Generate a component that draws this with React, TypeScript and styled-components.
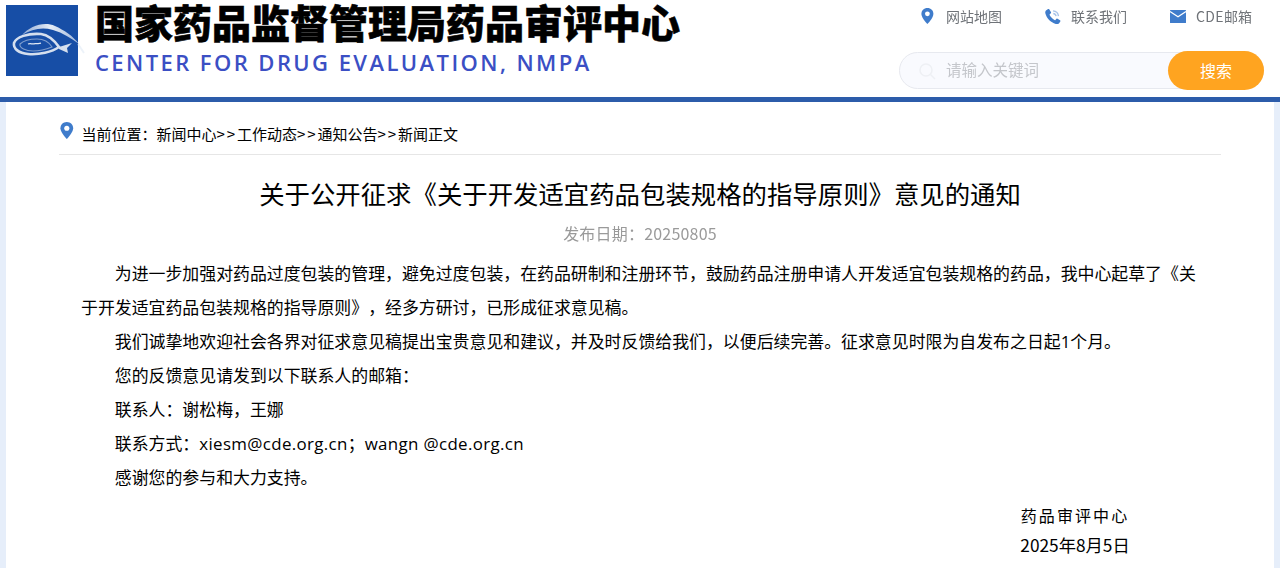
import * as React from 'react'
import styled, { createGlobalStyle } from 'styled-components'

const cjk = `"Noto Sans CJK SC", "Open Sans", sans-serif`
const barBlue = '#2c5caa'
const iconBlue = '#3f7ccb'

const GlobalStyle = createGlobalStyle`
	html, body {
		margin: 0;
		padding: 0;
		height: 568px;
		overflow: hidden;
		background: #e6eefa;
		font-family: "Open Sans", "Noto Sans CJK SC", sans-serif;
		color: #000;
		text-spacing-trim: space-all;
	}
`

const Header = styled.header`
	display: flex;
	justify-content: space-between;
	height: 97px;
	background: #fff;
	border-bottom: 5px solid ${barBlue};
`

const Brand = styled.div`
	display: flex;
	padding: 5px 0 0 6px;
`

const LogoBox = styled.div`
	width: 80px;
	height: 71px;
`

const BrandText = styled.div`
	display: flex;
	flex-direction: column;
	margin-left: 9px;
	margin-top: -4px;
`

const BrandTitle = styled.div`
	font-family: ${cjk};
	font-size: 39px;
	font-weight: 900;
	line-height: 40px;
	white-space: nowrap;
	color: #000;
	-webkit-text-stroke: 0.6px #000;
`

const BrandSub = styled.div`
	margin-top: 7px;
	font-family: "Open Sans", sans-serif;
	font-size: 22px;
	font-weight: 600;
	line-height: 28px;
	letter-spacing: 2.42px;
	white-space: nowrap;
	color: #3b4fc4;
`

const Tools = styled.div`
	display: flex;
	flex-direction: column;
	align-items: flex-end;
	padding: 7px 16px 0 0;
`

const ToolLinks = styled.nav`
	display: flex;
	gap: 43px;
	padding-right: 12px;
`

const ToolLink = styled.a<{ $gap?: number }>`
	display: flex;
	align-items: center;
	gap: ${props => props.$gap || 10}px;
	height: 18px;
	font-family: ${cjk};
	font-size: 14px;
	color: #6f7378;
	filter: blur(0.3px);
`

const Latin = styled.span`
	letter-spacing: 0.4px;
`

const SearchBox = styled.div`
	position: relative;
	display: flex;
	align-items: center;
	box-sizing: border-box;
	width: 365px;
	height: 37px;
	margin-top: 27px;
	padding-left: 18px;
	background: #f9fafe;
	border: 1px solid #e7e9ef;
	border-radius: 19px;
`

const Placeholder = styled.span`
	margin: -4px 0 0 10px;
	font-family: ${cjk};
	font-size: 15.5px;
	color: #c4c6cb;
	filter: blur(0.6px);
`

const SearchButton = styled.button`
	position: absolute;
	right: -1px;
	top: -2px;
	width: 96px;
	height: 39px;
	border: 0;
	border-radius: 20px;
	background: #ffa420;
	color: #fff;
	font-family: ${cjk};
	font-size: 16px;
	padding: 0 0 2px;
`

const Main = styled.main`
	position: relative;
	box-sizing: border-box;
	height: 466px;
	margin: 0 6px;
	padding: 0 53px;
	background: #fff;
	overflow: hidden;
`

const Crumbs = styled.div`
	display: flex;
	align-items: flex-start;
	height: 53px;
	border-bottom: 1px solid #e6e6e6;
	font-family: ${cjk};
	font-size: 15px;
	line-height: 20px;
	box-sizing: border-box;
`

const CrumbIcon = styled.span`
	display: block;
	margin: 20px 8px 0 1px;
`

const CrumbText = styled.span`
	margin-top: 22px;
	white-space: nowrap;
`

const CrumbSep = styled.span`
	letter-spacing: 1.900px;
`

const Title = styled.h1`
	margin: 18px 0 0;
	font-family: ${cjk};
	font-size: 25.4px;
	font-weight: 400;
	line-height: 40px;
	text-align: center;
	white-space: nowrap;
`

const PubDate = styled.div`
	margin-top: 8px;
	font-family: ${cjk};
	font-size: 16px;
	line-height: 24px;
	letter-spacing: 0.2px;
	color: #9a9a9a;
	text-align: center;
	filter: blur(0.5px);
`

const Article = styled.article`
	margin-top: 12px;
	padding: 0 10px 0 22px;
	font-family: "Open Sans", "Noto Sans CJK SC", sans-serif;
	font-size: 16.9px;
	line-height: 34px;
`

const Para = styled.p`
	margin: 0;
	text-indent: 2em;
`

const Email = styled.span`
	letter-spacing: 0.35px;
`

const Signature = styled.div`
	display: flex;
	flex-direction: column;
	align-items: center;
	width: 110px;
	margin: 6px 91px 0 auto;
	font-family: ${cjk};
	line-height: 29px;
`

const SignOrg = styled.div`
	font-size: 16px;
	letter-spacing: 2.1px;
	white-space: nowrap;
`

const SignDate = styled.div`
	font-size: 17.300px;
	white-space: nowrap;
`

const Pin = ({ size = 16 }: { size?: number }) => (
	<svg width={ size * 0.8 } height={ size } viewBox="0 0 16 20">
		<path d="M8 0C3.600 0 .5 3.300.5 7.400.5 12.500 8 20 8 20s7.500-7.500 7.500-12.600C15.500 3.300 12.400 0 8 0z" fill={ iconBlue } />
		<circle cx="8" cy="7.300" r="3" fill="#fff" />
	</svg>
)

const Phone = () => (
	<svg width="16" height="17" viewBox="0 0 17 17">
		<path d="M3.300.6 1 2.200C.2 3 .1 4.300.5 5.700 1.700 10.300 6 15 11.500 16.400c1.500.4 2.700 0 3.500-.8l1.300-1.900c.2-.4.100-.8-.3-1.100l-2.700-1.800c-.4-.2-.8-.2-1.100.1l-1.100 1.300c-.3.300-.7.300-1 .1C8 11.200 6 9.100 4.900 7c-.2-.3-.1-.7.200-1l1.100-1c.3-.3.400-.7.200-1.100L4.500.9C4.200.500 3.700.4 3.300.6z" fill={ iconBlue } />
		<path d="M8.500 2.500c3 .2 5.500 2.500 5.800 5.600M8.800 5.300c1.600.2 2.700 1.300 3 2.900" stroke="#a9c4e8" strokeWidth="1.500" fill="none" />
	</svg>
)

const Mail = () => (
	<svg width="16" height="13" viewBox="0 0 16 13">
		<rect y="0" width="16" height="13" rx="0.500" fill={ iconBlue } />
		<path d="M0 1.500 8 6.800l8-5.300" stroke="#fff" strokeWidth="1.300" fill="none" />
	</svg>
)

const Magnifier = () => (
	<svg width="18" height="18" viewBox="0 0 18 18" fill="none" stroke="#eef0f4" strokeWidth="1.500">
		<circle cx="8" cy="8" r="6" />
		<path d="M12.500 12.500 17 17" />
	</svg>
)

// coordinates are page pixels, the viewBox starts where the logo sits
const Logo = () => (
	<svg width="80" height="71" viewBox="6 5 80 71">
		<defs>
			<linearGradient id="logoArc" x1="0" y1="0" x2="1" y2="0">
				<stop offset="0" stopColor="#8fa9d4" />
				<stop offset="0.5" stopColor="#e6edf6" />
				<stop offset="1" stopColor="#9db5da" />
			</linearGradient>
		</defs>
		<rect x="6" y="5" width="72" height="71" fill="#174ea6" />
		<path d="M22 35C30 26 44 21 55 26c9 4 18 10 24 18-8-6-16-11-26-14-11-3-21-1-31 5z" fill="url(#logoArc)" />
		<path d="M14 43c2-6 14-10 27-9 8 1 13 6 18 13-7 5-20 8-31 7-9-1-15-5-14-11z" fill="none" stroke="#d5dfee" strokeWidth="2.600" />
		<path d="M20 44c3-3 9-5 17-5 7 0 12 3 15 8-5 2-12 4-19 4-7 0-14-3-13-7z" fill="none" stroke="#7f9dcd" strokeWidth="1.200" />
		<path d="M28 44c3-1 4 .5 7-.3 2-.5 3 .3 6-.5" stroke="#e0e8f3" strokeWidth="1.300" fill="none" />
		<path d="M59 47l13-4-5 5 1 5-9-4z" fill="#d5dfee" />
		<path d="M78 44l6 9" stroke="#dbe6f4" strokeWidth="2" opacity="0.500" />
	</svg>
)

const App = () => (
	<>
		<GlobalStyle />
		<Header>
			<Brand>
				<LogoBox><Logo /></LogoBox>
				<BrandText>
					<BrandTitle>国家药品监督管理局药品审评中心</BrandTitle>
					<BrandSub>CENTER FOR DRUG EVALUATION, NMPA</BrandSub>
				</BrandText>
			</Brand>
			<Tools>
				<ToolLinks>
					<ToolLink $gap={ 12 }><Pin />网站地图</ToolLink>
					<ToolLink><Phone />联系我们</ToolLink>
					<ToolLink><Mail /><span><Latin>CDE</Latin>邮箱</span></ToolLink>
				</ToolLinks>
				<SearchBox>
					<Magnifier />
					<Placeholder>请输入关键词</Placeholder>
					<SearchButton>搜索</SearchButton>
				</SearchBox>
			</Tools>
		</Header>
		<Main>
			<Crumbs>
				<CrumbIcon><Pin size={ 17 } /></CrumbIcon>
				<CrumbText>
					当前位置：新闻中心<CrumbSep>&gt;&gt;</CrumbSep>工作动态<CrumbSep>&gt;&gt;</CrumbSep>通知公告<CrumbSep>&gt;&gt;</CrumbSep>新闻正文
				</CrumbText>
			</Crumbs>
			<Title>关于公开征求《关于开发适宜药品包装规格的指导原则》意见的通知</Title>
			<PubDate>发布日期：20250805</PubDate>
			<Article>
				<Para>为进一步加强对药品过度包装的管理，避免过度包装，在药品研制和注册环节，鼓励药品注册申请人开发适宜包装规格的药品，我中心起草了《关于开发适宜药品包装规格的指导原则》，经多方研讨，已形成征求意见稿。</Para>
				<Para>我们诚挚地欢迎社会各界对征求意见稿提出宝贵意见和建议，并及时反馈给我们，以便后续完善。征求意见时限为自发布之日起1个月。</Para>
				<Para>您的反馈意见请发到以下联系人的邮箱：</Para>
				<Para>联系人：谢松梅，王娜</Para>
				<Para>联系方式：<Email>xiesm@cde.org.cn</Email>；<Email>wangn @cde.org.cn</Email></Para>
				<Para>感谢您的参与和大力支持。</Para>
			</Article>
			<Signature>
				<SignOrg>药品审评中心</SignOrg>
				<SignDate>2025年8月5日</SignDate>
			</Signature>
		</Main>
	</>
)

export default App
